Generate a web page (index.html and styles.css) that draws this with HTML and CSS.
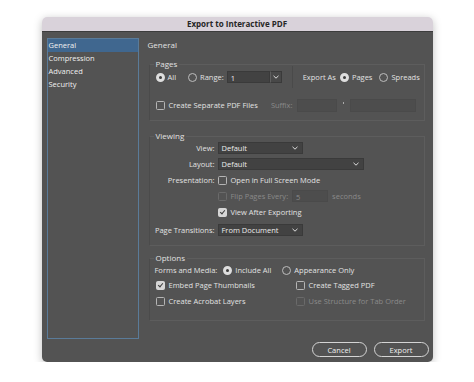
FILE: index.html
```html
<!DOCTYPE html>
<html lang="en">
<head>
  <meta charset="UTF-8">
  <title>Export to Interactive PDF</title>
  <link rel="stylesheet" href="styles.css">
</head>
<body>
  <div class="dialog">
    <div class="titlebar">Export to Interactive PDF</div>
    <div class="content">
      <div class="main-row">
        <ul class="sidebar">
          <li class="selected">General</li>
          <li>Compression</li>
          <li>Advanced</li>
          <li>Security</li>
        </ul>

        <div class="pane">
          <div class="pane-title">General</div>

          <!-- Pages -->
          <fieldset class="group group-pages">
            <legend>Pages</legend>
            <div class="row row-range">
              <span class="radio checked"></span><span class="lbl">All</span>
              <span class="radio range-radio"></span><span class="lbl">Range:</span>
              <span class="combo">
                <span class="field range-field">1</span>
                <span class="combo-btn"><svg width="6" height="4" viewBox="0 0 6 4"><polyline points="0.5,0.8 3,3.2 5.5,0.8" fill="none" stroke="#ddd" stroke-width="1"/></svg></span>
              </span>
              <span class="vdivider"></span>
              <span class="lbl">Export As</span>
              <span class="radio checked export-radio"></span><span class="lbl">Pages</span>
              <span class="radio spreads-radio"></span><span class="lbl">Spreads</span>
            </div>
            <div class="row row-separate">
              <span class="check"></span><span class="lbl">Create Separate PDF Files</span>
              <span class="lbl disabled suffix">Suffix:</span>
              <span class="field field-off suffix-a"></span>
              <span class="tick-mark"></span>
              <span class="field field-off suffix-b"></span>
            </div>
          </fieldset>

          <!-- Viewing -->
          <fieldset class="group group-viewing">
            <legend>Viewing</legend>
            <div class="form-grid">
              <span class="form-label">View:</span>
              <span class="select select-short">Default<svg width="6" height="4" viewBox="0 0 6 4"><polyline points="0.5,0.8 3,3.2 5.5,0.8" fill="none" stroke="#ddd" stroke-width="1"/></svg></span>

              <span class="form-label">Layout:</span>
              <span class="select select-long">Default<svg width="6" height="4" viewBox="0 0 6 4"><polyline points="0.5,0.8 3,3.2 5.5,0.8" fill="none" stroke="#ddd" stroke-width="1"/></svg></span>

              <span class="form-label">Presentation:</span>
              <span class="ctl"><span class="check"></span><span class="lbl">Open in Full Screen Mode</span></span>

              <span class="form-label"></span>
              <span class="ctl disabled"><span class="check check-off"></span><span class="lbl">Flip Pages Every:</span><span class="field field-off secs">5</span><span class="lbl">seconds</span></span>

              <span class="form-label"></span>
              <span class="ctl"><span class="check checked"></span><span class="lbl">View After Exporting</span></span>

              <span class="form-label transitions">Page Transitions:</span>
              <span class="select select-short transitions">From Document<svg width="6" height="4" viewBox="0 0 6 4"><polyline points="0.5,0.8 3,3.2 5.5,0.8" fill="none" stroke="#ddd" stroke-width="1"/></svg></span>
            </div>
          </fieldset>

          <!-- Options -->
          <fieldset class="group group-options">
            <legend>Options</legend>
            <div class="row">
              <span class="lbl forms-lbl">Forms and Media:</span>
              <span class="radio checked"></span><span class="lbl">Include All</span>
              <span class="radio appearance-radio"></span><span class="lbl">Appearance Only</span>
            </div>
            <div class="opt-grid">
              <span class="ctl"><span class="check checked"></span><span class="lbl">Embed Page Thumbnails</span></span>
              <span class="ctl"><span class="check"></span><span class="lbl">Create Tagged PDF</span></span>
              <span class="ctl"><span class="check"></span><span class="lbl">Create Acrobat Layers</span></span>
              <span class="ctl disabled"><span class="check check-off"></span><span class="lbl">Use Structure for Tab Order</span></span>
            </div>
          </fieldset>
        </div>
      </div>

      <div class="footer">
        <button class="btn">Cancel</button>
        <button class="btn">Export</button>
      </div>
    </div>
  </div>
</body>
</html>
```

FILE: styles.css
```css
body {
  margin: 0;
  background: #fff;
  font-family: 'Open Sans', sans-serif;
  font-size: 7.5px;
  color: #e2e2e2;
}

.dialog {
  width: 391px;
  margin: 17px auto 0;
  border-radius: 5px;
  box-shadow: 0 2px 8px rgba(0, 0, 0, 0.25);
}

.titlebar {
  height: 14px;
  line-height: 14px;
  text-align: center;
  font-weight: bold;
  font-size: 8px;
  color: #262626;
  background: #d9d2da;
  border-radius: 5px 5px 0 0;
  border-bottom: 1px solid #3c3c3c;
}

.content {
  height: 330px;
  background: #535353;
  border-radius: 0 0 5px 5px;
  padding: 6px 4px 0 5px;
  box-sizing: border-box;
}

.main-row {
  display: flex;
}

/* sidebar list */
.sidebar {
  list-style: none;
  margin: 0;
  padding: 0;
  width: 92px;
  height: 301px;
  box-sizing: border-box;
  border: 1px solid #5a7b99;
}

.sidebar li {
  height: 13px;
  line-height: 13px;
  padding-left: 1px;
  color: #f0f0f0;
}

.sidebar li.selected {
  background: #40678f;
}

/* right pane */
.pane {
  flex: 1;
  margin-left: 5px;
  padding-right: 4px;
}

.pane-title {
  height: 12px;
  line-height: 12px;
  margin: 1px 0 0 4px;
  font-size: 8px;
}

.group {
  margin: 8px 0 0 5px;
  padding: 0;
  border: 1px solid #5d5d5d;
  border-left-color: #4b4b4b;
  min-width: 0;
}

.group legend {
  padding: 0 2px;
  margin-left: 4px;
  font-size: 8px;
  line-height: 10px;
}

.row {
  display: flex;
  align-items: center;
  height: 14px;
  padding-left: 6px;
}

.lbl {
  white-space: nowrap;
}

.disabled,
.disabled .lbl {
  color: #8a8a8a;
}

/* radio buttons and checkboxes */
.radio {
  width: 7px;
  height: 7px;
  border: 1px solid #bdbdbd;
  border-radius: 50%;
  margin-right: 3px;
  flex: none;
}

.radio.checked {
  border: 3px solid #dedede;
  width: 3px;
  height: 3px;
  background: #3d3d3d;
}

.check {
  width: 7px;
  height: 7px;
  border: 1px solid #b5b5b5;
  border-radius: 1.5px;
  margin-right: 4px;
  flex: none;
  position: relative;
}

.check.checked {
  background: #d6d6d6;
  border-color: #d6d6d6;
}

.check.checked::after {
  content: '';
  position: absolute;
  left: 2px;
  top: 0;
  width: 2px;
  height: 4px;
  border: solid #3d3d3d;
  border-width: 0 1.3px 1.3px 0;
  transform: rotate(40deg);
}

.check.check-off {
  border-color: #6a6a6a;
}

/* text fields and popups */
.field {
  display: inline-block;
  height: 12px;
  line-height: 12px;
  box-sizing: border-box;
  background: #424242;
  border: 1px solid #3a3a3a;
  padding-left: 3px;
  color: #ececec;
}

.field-off {
  background: #4d4d4d;
  border-color: #4a4a4a;
  color: #8a8a8a;
}

.row-range {
  margin-top: 1px;
}

.range-radio {
  margin-left: 12px;
}

.combo {
  display: flex;
  margin-left: 3px;
}

.range-field {
  width: 43px;
}

.combo-btn {
  width: 12px;
  height: 12px;
  box-sizing: border-box;
  border: 1px solid #3a3a3a;
  border-left: 1px solid #5f5f5f;
  background: #484848;
  display: flex;
  align-items: center;
  justify-content: center;
}

.vdivider {
  width: 1px;
  height: 22px;
  background: #4a4a4a;
  margin: 0 10px;
}

.export-radio {
  margin-left: 4px;
}

.spreads-radio {
  margin-left: 7px;
}

.row-separate {
  margin: 14px 0 8px;
}

.suffix {
  margin-left: 13px;
}

.suffix-a {
  width: 40px;
  height: 13px;
  margin-left: 5px;
}

.tick-mark {
  width: 1px;
  height: 2px;
  background: #aaa;
  margin: -4px 6px 0;
}

.suffix-b {
  width: 66px;
  height: 13px;
}

/* viewing form */
.group-viewing {
  margin-top: 10px;
}

.form-grid {
  display: grid;
  grid-template-columns: 61px auto;
  column-gap: 3px;
  row-gap: 4px;
  align-items: center;
  padding: 1px 0 9px 4px;
  justify-items: start;
}

.form-label {
  justify-self: end;
  white-space: nowrap;
  height: 12px;
  line-height: 12px;
}

.select {
  display: flex;
  align-items: center;
  justify-content: space-between;
  height: 12px;
  box-sizing: border-box;
  background: #424242;
  border: 1px solid #3a3a3a;
  padding: 0 4px 0 3px;
  color: #ececec;
}

.select-short {
  width: 85px;
}

.select-long {
  width: 146px;
}

.select.transitions,
.form-label.transitions {
  margin-top: 2px;
}

.ctl {
  display: flex;
  align-items: center;
  height: 12px;
}

.secs {
  width: 36px;
  margin: 0 4px 0 4px;
}

/* options */
.group-options {
  margin-top: 7px;
}

.forms-lbl {
  margin-right: 6px;
  margin-left: -1px;
}

.appearance-radio {
  margin-left: 11px;
}

.opt-grid {
  display: grid;
  grid-template-columns: 140px auto;
  row-gap: 4px;
  padding: 2px 0 13px 6px;
}

/* footer buttons */
.footer {
  display: flex;
  justify-content: flex-end;
  gap: 7px;
  margin-top: 3px;
  padding-right: 0;
}

.btn {
  width: 55px;
  height: 15px;
  background: transparent;
  border: 1.5px solid #d4d4d4;
  border-radius: 8px;
  color: #efefef;
  font-family: 'Open Sans', sans-serif;
  font-size: 7.5px;
  padding: 0;
}
```
